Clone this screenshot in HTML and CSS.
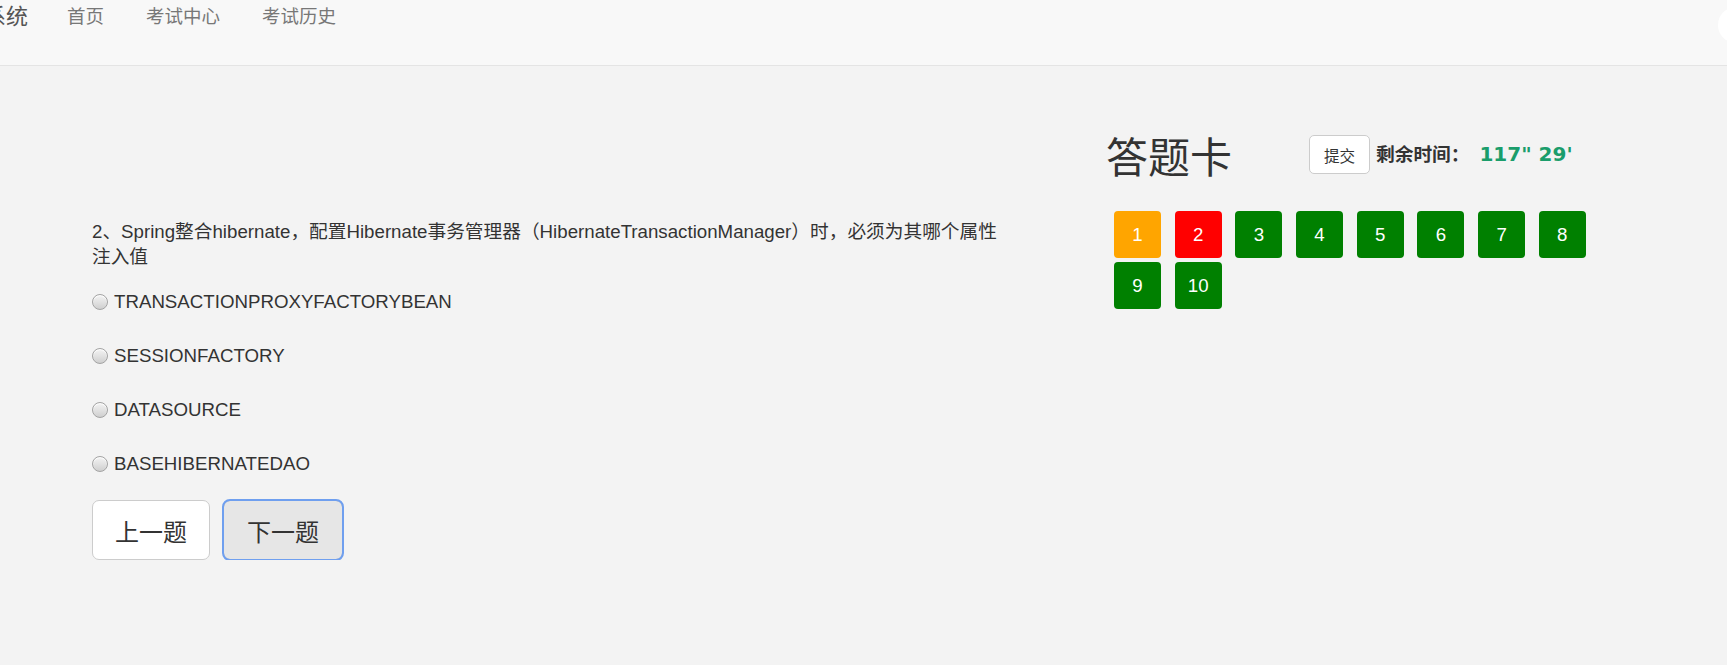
FILE: index.html
```html
<!DOCTYPE html>
<html lang="zh-CN">
<head>
<meta charset="utf-8">
<title>考试系统</title>
<link rel="stylesheet" href="styles.css">
</head>
<body>
<header class="navbar">
  <a class="brand" href="#">考试系统</a>
  <nav class="nav">
    <a class="nav-link" href="#">首页</a>
    <a class="nav-link" href="#">考试中心</a>
    <a class="nav-link" href="#">考试历史</a>
  </nav>
  <span class="float-ball"></span>
</header>
<main class="page">
  <section class="question-col">
    <p class="question">2、Spring整合hibernate，配置Hibernate事务管理器（HibernateTransactionManager）时，必须为其哪个属性注入值</p>
    <label class="option"><input class="radio" type="radio" name="q2"><span>TRANSACTIONPROXYFACTORYBEAN</span></label>
    <label class="option"><input class="radio" type="radio" name="q2"><span>SESSIONFACTORY</span></label>
    <label class="option"><input class="radio" type="radio" name="q2"><span>DATASOURCE</span></label>
    <label class="option"><input class="radio" type="radio" name="q2"><span>BASEHIBERNATEDAO</span></label>
    <div class="actions">
      <button class="btn" type="button">上一题</button>
      <button class="btn btn-focus" type="button">下一题</button>
    </div>
  </section>
  <aside class="card-col">
    <div class="card-head">
      <h2 class="card-title">答题卡</h2>
      <button class="btn-sm" type="button">提交</button>
      <span class="countdown"><span class="time-label">剩余时间：</span><span class="timer">117" 29'</span></span>
    </div>
    <div class="grid">
      <span class="cell cell-current">1</span>
      <span class="cell cell-wrong">2</span>
      <span class="cell cell-done">3</span>
      <span class="cell cell-done">4</span>
      <span class="cell cell-done">5</span>
      <span class="cell cell-done">6</span>
      <span class="cell cell-done">7</span>
      <span class="cell cell-done">8</span>
      <span class="cell cell-done">9</span>
      <span class="cell cell-done">10</span>
    </div>
  </aside>
</main>
</body>
</html>
```

FILE: styles.css
```css
* { box-sizing: border-box; }

html, body {
  margin: 0;
  padding: 0;
}

body {
  background: #f3f3f3;
  color: #333;
  font-family: "Liberation Sans", Arial, "Noto Sans CJK SC", sans-serif;
  font-size: 18.7px;
  line-height: 26px;
  overflow: hidden;
}

.navbar {
  position: relative;
  height: 66px;
  background: #f8f8f8;
  border-bottom: 1px solid #e4e4e4;
  display: flex;
  align-items: flex-start;
  padding-top: 4px;
}

.brand {
  margin-left: -60px;
  font-size: 22px;
  line-height: 26px;
  color: #555;
  text-decoration: none;
}

.nav {
  display: flex;
  margin-left: 18px;
}

.nav-link {
  padding: 0 21px;
  font-size: 18.5px;
  line-height: 26px;
  color: #777;
  text-decoration: none;
}

.float-ball {
  position: absolute;
  right: -27px;
  top: 7px;
  width: 36px;
  height: 36px;
  border-radius: 50%;
  background: #fff;
}

.page {
  display: flex;
  align-items: flex-start;
}

.question-col {
  width: 915px;
  margin-left: 92px;
  padding-top: 153px;
}

.question {
  margin: 0 0 20px;
  line-height: 25px;
}

.option {
  display: flex;
  align-items: center;
  margin-bottom: 28px;
  cursor: pointer;
}

.radio {
  -webkit-appearance: none;
  appearance: none;
  width: 16px;
  height: 16px;
  margin: 0 6px 0 0;
  border: 1px solid #a3a3a3;
  border-radius: 50%;
  background: linear-gradient(#f4f4f4, #cfcfcf);
  box-shadow: inset 0 1px 1px #fff;
}

.actions {
  display: flex;
  gap: 13px;
  margin-top: -5px;
}

.btn {
  width: 118px;
  height: 60px;
  border: 1px solid #ccc;
  border-radius: 7px;
  background: #fff;
  color: #333;
  font-family: inherit;
  font-size: 24px;
  cursor: pointer;
}

.btn-focus {
  width: 120px;
  background: #e6e6e6;
  border-color: #adadad;
  outline: 2px solid #6f9fef;
  outline-offset: -1px;
}

.card-col {
  margin-left: 99px;
  padding-top: 63px;
}

.card-head {
  display: flex;
  align-items: flex-start;
}

.card-title {
  margin: 0;
  padding-top: 5px;
  font-size: 42px;
  line-height: 50px;
  font-weight: normal;
}

.btn-sm {
  margin: 6px 0 0 77px;
  width: 61px;
  height: 39px;
  border: 1px solid #ccc;
  border-radius: 5px;
  background: #fff;
  color: #333;
  font-family: inherit;
  font-size: 15.6px;
  padding: 0;
}

.countdown {
  margin: 12px 0 0 6px;
  line-height: 26px;
  white-space: nowrap;
}

.time-label {
  font-weight: bold;
}

.timer {
  margin-left: 10px;
  font-family: "DejaVu Sans", Verdana, sans-serif;
  font-weight: bold;
  font-size: 20px;
  color: #1a9d6b;
}

.grid {
  display: grid;
  grid-template-columns: repeat(8, 47px);
  column-gap: 13.7px;
  row-gap: 4px;
  margin: 27px 0 0 8px;
}

.cell {
  height: 47px;
  border-radius: 4px;
  display: flex;
  align-items: center;
  justify-content: center;
  color: #fff;
  font-size: 18.7px;
}

.cell-current { background: #ffa500; }
.cell-wrong { background: #ff0000; }
.cell-done { background: #008000; }
```
